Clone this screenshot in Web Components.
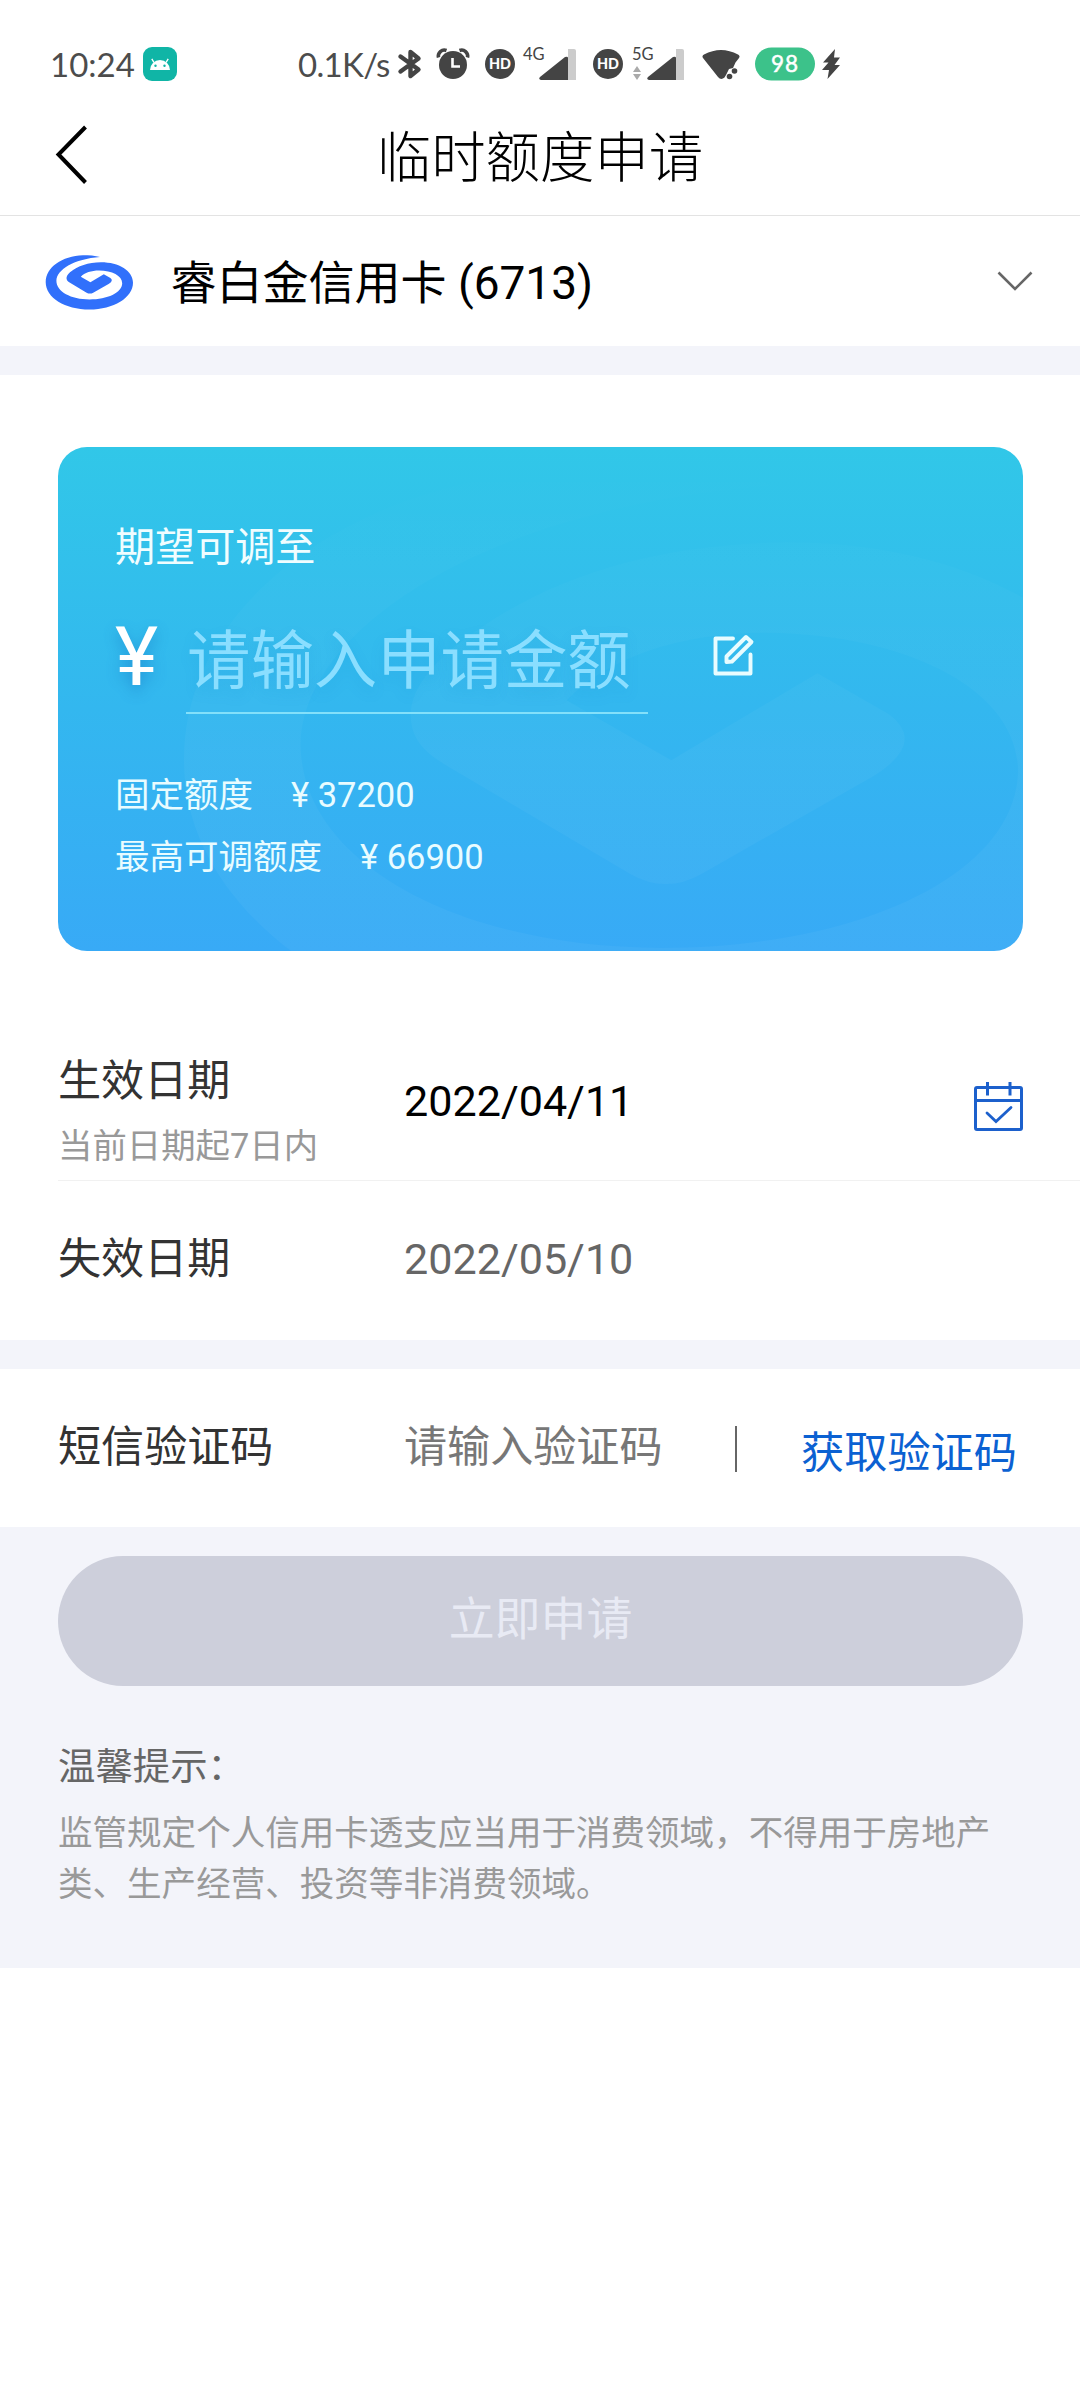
<!DOCTYPE html>
<html lang="zh-CN">
<head>
<meta charset="utf-8">
<title>临时额度申请</title>
<style>
html,body{margin:0;padding:0;background:#fff}
body{width:1080px;height:2400px;overflow:hidden;font-family:Roboto,"Noto Sans CJK SC",sans-serif;color:#333}
</style>
</head>
<body>
<limit-page></limit-page>
<script>
const define = (name, html) => {
  const tpl = document.createElement('template');
  tpl.innerHTML = html;
  customElements.define(name, class extends HTMLElement {
    constructor() {
      super();
      this.attachShadow({mode: 'open'}).appendChild(tpl.content.cloneNode(true));
    }
  });
};

// Spiral brand mark, shared by the card row and the quota card watermark (87 x 54.3 units)
const MARK = 'M54 1.800C49 .4 43 0 37 0C16 .8 -.3 12 -.3 27C-.3 42.5 19 54.3 43.5 54.3C67.5 54.3 87 42.5 87 27.5C87 15.5 73 7 55 7C42 7.2 32 10.500 24 17C21.3 19.500 20.5 21.2 20.5 23C20.6 25 21.6 26.2 24 27.6L40.6 37.4Q43.9 39.3 47.2 37.4L63 28.4Q67.8 25.4 64.4 22.8L57.8 19L44.4 27L34.800 21.500C38.500 17.500 45.5 15.3 53 15.3C66 15.4 76.2 20.5 76.2 28C76 37.5 61.5 44.2 43.5 44.2C25 44.2 10.4 36.4 10.4 25.5C10.6 14.5 28.5 3.5 54 1.800Z';

define('status-bar', `
<style>
:host{display:block;height:96px;box-sizing:border-box;padding:32px 0 0 50px;color:#444;font-family:Lato,sans-serif}
.row{display:flex;align-items:center;height:64px}
.t{font-size:33px;line-height:64px;height:64px;white-space:nowrap;font-weight:400;color:#4c4c4c}
svg{display:block;flex:none;overflow:visible}
svg text{font-family:Lato,sans-serif}
.net{display:flex;flex:none;height:34px}
.g{font-size:16.500px;line-height:20px;width:0;white-space:nowrap;margin-top:-3px}
</style>
<div class="row">
  <span class="t" style="width:93px">10:24</span>
  <svg width="34" height="34" viewBox="0 0 34 34"><rect width="34" height="34" rx="9" fill="#10b5a6"/><path d="M7 23a10 10 0 0 1 20 0z" fill="#fff"/><path d="M11 15.5L8.8 11.8M23 15.5l2.2-3.7" stroke="#fff" stroke-width="1.4"/><circle cx="12.5" cy="18.8" r="1.2" fill="#10b5a6"/><circle cx="21.5" cy="18.8" r="1.2" fill="#10b5a6"/></svg>
  <span class="t" style="margin-left:121px;width:100px;letter-spacing:-.7px">0.1K/s</span>
  <svg width="24" height="30" viewBox="0 0 24 30" fill="none" stroke="#444" stroke-width="4.400" stroke-linejoin="round" stroke-linecap="round"><path d="M2.500 7.500l18 13-8 6.5v-24l8 6.500L2.500 22.5"/></svg>
  <svg style="margin-left:15px" width="32" height="30" viewBox="0 0 32 30"><circle cx="16" cy="16" r="14" fill="#444"/><path d="M1.5 8.5a6 6 0 0 1 8-7M30.5 8.5a6 6 0 0 0-8-7" stroke="#444" stroke-width="3.5" fill="none"/><path d="M15.5 9v8.5H23" stroke="#fff" stroke-width="2.6" fill="none"/></svg>
  <svg style="margin-left:16px" width="30" height="30"><circle cx="15" cy="15" r="15" fill="#444"/><text x="15" y="20" text-anchor="middle" font-size="14.5" font-weight="900" fill="#fff" textLength="22" lengthAdjust="spacingAndGlyphs">HD</text></svg>
  <div class="net" style="margin-left:8px"><span class="g">4G</span><svg width="54" height="34"><path d="M45 2h6q2 0 2 2v29h-8z" fill="#ccc"/><path d="M18 33q-3-1-1-3L42 10q3-1 3 1v22z" fill="#444"/></svg></div>
  <svg style="margin-left:16px" width="30" height="30"><circle cx="15" cy="15" r="15" fill="#444"/><text x="15" y="20" text-anchor="middle" font-size="14.5" font-weight="900" fill="#fff" textLength="22" lengthAdjust="spacingAndGlyphs">HD</text></svg>
  <div class="net" style="margin-left:9px"><span class="g">5G</span><svg width="53" height="34"><path d="M1 25l4-6 4 6zM1 27l4 6 4-6z" fill="#aaa"/><path d="M44 2h6q2 0 2 2v29h-8z" fill="#ccc"/><path d="M17 33q-3-1-1-3L41 10q3-1 3 1v22z" fill="#444"/></svg></div>
  <svg style="margin-left:17px" width="39" height="31" viewBox="0 0 39 31"><path d="M1 9Q-.5 7 2 5.500Q19-3.500 36 5.500Q38.500 7 37 9L33.500 13.500 31 19 27 20 24 26 22.500 28.500Q19 31.500 16 28z" fill="#444"/><circle cx="32.500" cy="22" r="2.800" fill="#444"/><circle cx="27.500" cy="27.500" r="2.800" fill="#444"/></svg>
  <svg style="margin-left:14px" width="60" height="34"><rect y=".5" width="60" height="33" rx="16.500" fill="#3cc28a"/><text x="29.500" y="25" text-anchor="middle" font-size="22.500" font-weight="400" fill="#fff" stroke="#fff" stroke-width=".5" textLength="27">98</text></svg>
  <svg style="margin-left:7px" width="19" height="30" viewBox="0 0 19 30"><path d="M13 0L1 13.500h5.500L0 21h7L5.500 30 18 16h-5.500L18 8.500h-6z" fill="#444"/></svg>
</div>`);

define('nav-bar', `
<style>
:host{display:flex;height:119px;border-bottom:1px solid #e3e3e3;align-items:center}
svg{margin-left:54px;flex:none}
h1{flex:1;margin:7px 90px 0 0;text-align:center;font-size:54.4px;line-height:80px;font-weight:300;color:#000}
</style>
<svg width="36" height="62" fill="none" stroke="#000" stroke-width="4"><path d="M31.500 2L4.500 29.500l27 28"/></svg>
<h1><slot></slot></h1>`);

define('card-selector', `
<style>
:host{display:flex;align-items:center;height:130px;padding:0 47px 0 46px}
.n{flex:1;margin:4px 0 0 37.500px;font-size:46px;line-height:60px;color:#000}
</style>
<svg style="margin-top:2px;overflow:visible" width="87" height="55" viewBox="0 0 87 54.500"><path d="${MARK}" fill="#3170fb"/></svg>
<span class="n"><slot></slot></span>
<svg width="36" height="20" fill="none" stroke="#666" stroke-width="2.600"><path d="M1.500 1.500L18 18 34.500 1.500"/></svg>`);

define('section-gap', `<style>:host{display:block;height:29px;background:#f3f4fa}</style>`);

define('quota-line', `
<style>
:host{display:flex;height:62px;line-height:62px;font-size:34.5px;color:#e9fcff}
.v{margin-left:38px}
</style>
<slot name="label"></slot><span class="v"><slot></slot></span>`);

define('quota-card', `
<style>
:host{display:block;position:relative;width:965px;height:504px;margin:72px 0 0 58px;border-radius:29px;overflow:hidden;background:linear-gradient(#31c7e8,#33b7ef 52%,#38aaf6)}
.wm{position:absolute;left:129px;top:19px;overflow:visible}
.in{position:relative;padding:71px 57px 0;display:flex;flex-direction:column}
.h{font-size:40.100px;line-height:60px;color:#f0fdff}
.amt{display:flex;height:136px;align-items:flex-start}
.y{width:71px;font-size:82px;line-height:80px;margin-top:39px;font-weight:400;color:#fff;text-shadow:0 6px 14px rgba(20,110,190,.45)}
.f{width:462px;height:136px;box-sizing:border-box;border-bottom:2px solid #83e0fa;padding:43px 0 0 1px;font-size:63.400px;line-height:80px;color:#8adeff;white-space:nowrap;text-shadow:0 6px 14px rgba(20,130,210,.15)}
svg.e{margin:55px 0 0 64px}
.q{margin-top:50px}
</style>
<svg class="wm" width="949" height="592" viewBox="0 0 87 54.300"><defs><linearGradient id="g" x1="0" y1="0" x2="0" y2="1"><stop offset="0" stop-color="#fff" stop-opacity="0"/><stop offset=".2" stop-color="#fff" stop-opacity=".018"/><stop offset=".5" stop-color="#fff" stop-opacity=".035"/><stop offset=".8" stop-color="#fff" stop-opacity=".035"/></linearGradient></defs><path d="${MARK}" fill="url(#g)"/></svg>
<div class="in">
  <div class="h">期望可调至</div>
  <div class="amt"><span class="y">¥</span><span class="f">请输入申请金额</span>
    <svg class="e" width="43" height="44" fill="none" stroke="#e8fcff" stroke-width="3.900" stroke-linejoin="round" stroke-linecap="round"><path d="M21 5.500H3.500v35h35V21.500"/><path d="M14.500 23.500L34 4l5.500 5L20 28.500l-5.500.5z"/></svg>
  </div>
  <div class="q">
    <quota-line><span slot="label">固定额度</span>¥ 37200</quota-line>
    <quota-line><span slot="label">最高可调额度</span>¥ 66900</quota-line>
  </div>
</div>`);

define('form-row', `
<style>
:host{display:flex;align-items:center;box-sizing:border-box;margin-left:58px;height:158px;font-size:43.100px;line-height:60px}
.l{width:346px;white-space:nowrap}
::slotted([slot=hint]){display:block;font-size:34.400px;line-height:65px;color:#999}
.v{flex:1;display:flex;align-items:center}
</style>
<div class="l"><slot name="label"></slot><slot name="hint"></slot></div>
<div class="v"><slot></slot></div>`);

define('calendar-icon', `
<style>:host{display:block}svg{display:block}</style>
<svg width="49" height="50" fill="none" stroke="#1c60cc" stroke-width="3"><rect x="1.500" y="6.500" width="46" height="42" rx="1.500"/><path d="M1.500 19.500h46M13.500 1v13.500M36 1v13.500"/><path d="M13 32l9 8.500L37 26.500" stroke-width="2.800" stroke-linecap="round"/></svg>`);

define('submit-button', `
<style>
:host{display:block;margin:0 57px 0 58px}
button{display:block;width:965px;height:130px;border:0;border-radius:65px;padding:0 0 5px;background:#cdcfdb;color:#e8eaf4;font:400 45.900px/60px Roboto,"Noto Sans CJK SC",sans-serif}
</style>
<button><slot></slot></button>`);

define('tips-panel', `
<style>
:host{display:block;padding:50px 50px 0 58px}
h2{margin:0;font-size:37.400px;line-height:62px;font-weight:400;color:#666}
p{margin:10px 0 0;font-size:34.540px;line-height:51px;color:#999}
</style>
<h2><slot name="title"></slot></h2><p><slot></slot></p>`);

define('limit-page', `
<style>
:host{display:block;width:1080px}
.start{height:132px;margin-top:97px;align-items:flex-start}
.start [slot=label]{display:block;line-height:65px;margin-top:1px;height:65px}
.start .d{margin-top:24px}
.start calendar-icon{margin:31px 57px 0 auto}
.line{margin-left:58px;height:1px;background:#f1f1f1}
.d{color:#000}
.off{color:#666;margin-top:-2px}
.end{height:159px}
.ph{color:#777;width:331px;margin-top:-1px}
.lab{position:relative;top:-.5px}
.bar{width:2px;height:46px;background:#666;margin-top:2px}
.get{color:#0b61d2;margin:11px 0 0 64px;font-size:43.200px}
.foot{background:#f3f4fa;height:441px;padding-top:29px;box-sizing:border-box}
</style>
<status-bar></status-bar>
<nav-bar>临时额度申请</nav-bar>
<card-selector>睿白金信用卡 (6713)</card-selector>
<section-gap></section-gap>
<quota-card></quota-card>
<form-row class="start"><span slot="label">生效日期</span><span slot="hint">当前日期起7日内</span><span class="d">2022/04/11</span><calendar-icon></calendar-icon></form-row>
<div class="line"></div>
<form-row class="end"><span slot="label" class="lab">失效日期</span><span class="off">2022/05/10</span></form-row>
<section-gap></section-gap>
<form-row><span slot="label" class="lab">短信验证码</span><span class="ph">请输入验证码</span><span class="bar"></span><span class="get">获取验证码</span></form-row>
<div class="foot">
  <submit-button>立即申请</submit-button>
  <tips-panel><span slot="title">温馨提示：</span>监管规定个人信用卡透支应当用于消费领域，不得用于房地产类、生产经营、投资等非消费领域。</tips-panel>
</div>`);
</script>
</body>
</html>
